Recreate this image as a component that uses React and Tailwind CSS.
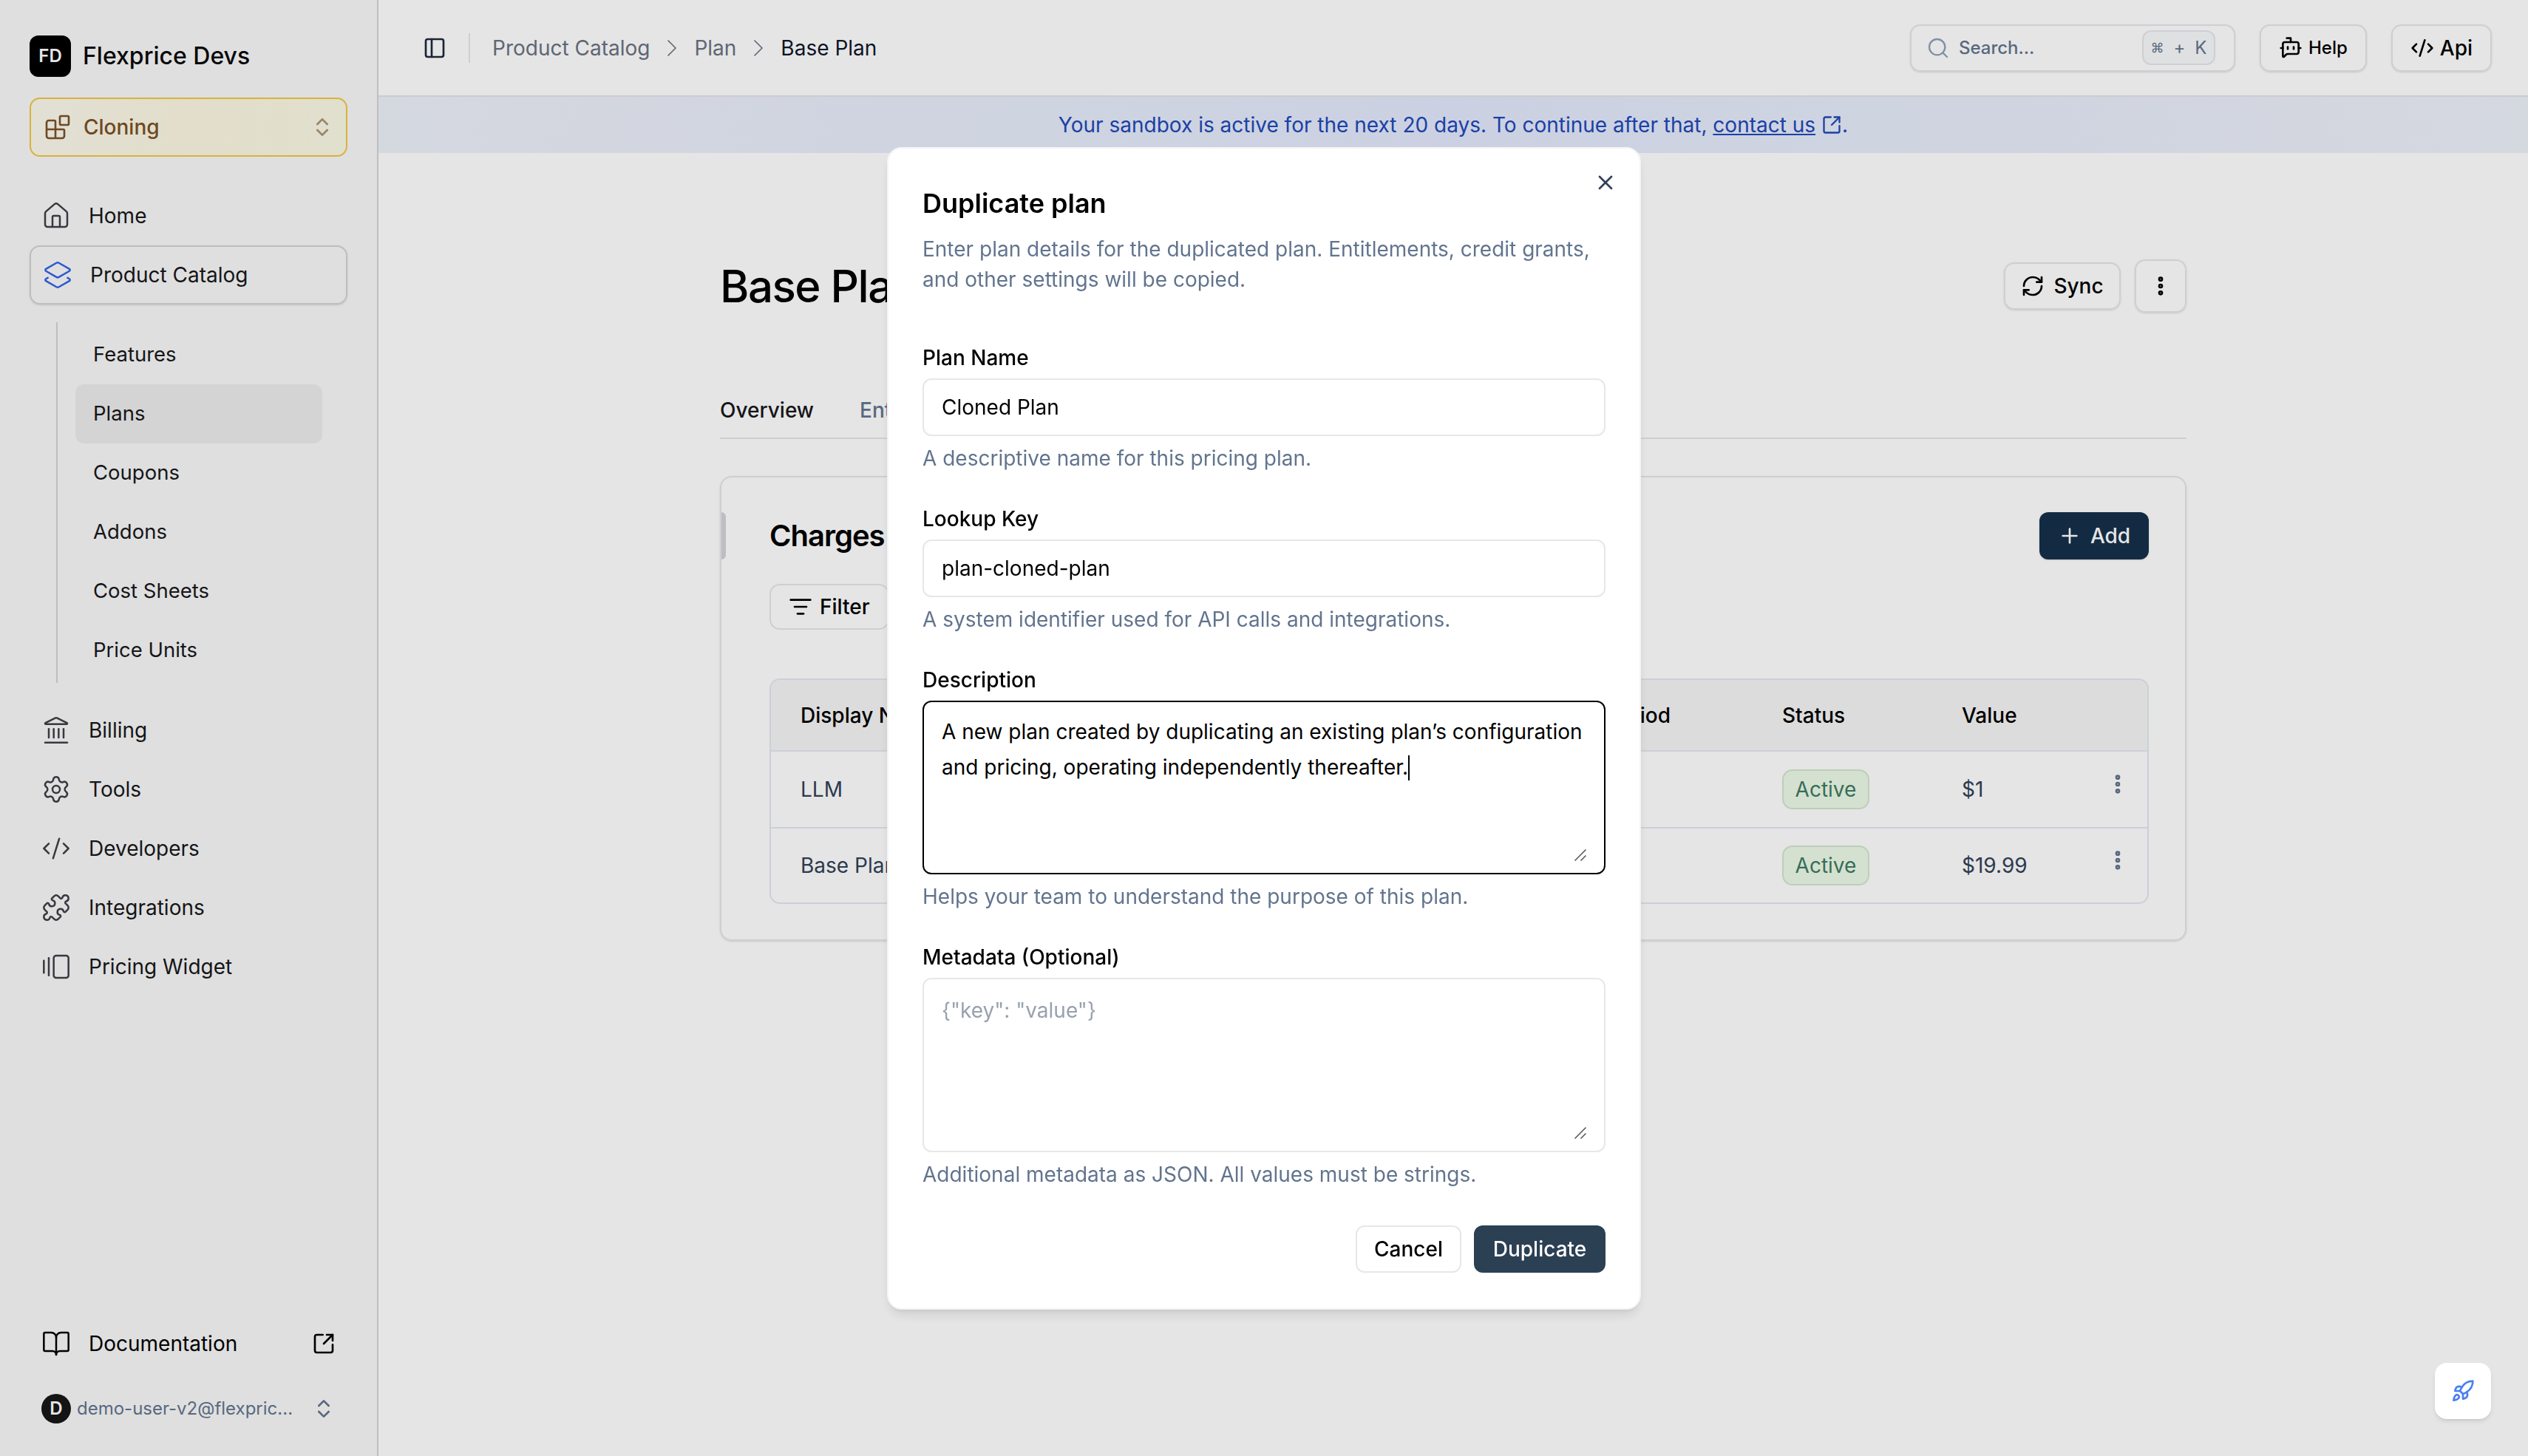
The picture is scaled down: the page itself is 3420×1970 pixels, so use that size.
import React from "react";
import {
  Blocks, ChevronsUpDown, House, Layers2, Landmark, Settings, CodeXml, Puzzle, GalleryHorizontalEnd,
  BookOpen, SquareArrowOutUpRight, PanelLeft, ChevronRight, Search, BotMessageSquare, RefreshCw,
  EllipsisVertical, ListFilter, Plus, X, Rocket,
} from "lucide-react";

function NavRow({ icon: Icon, label }) {
  return (
    <div className="flex h-20 items-center gap-6 px-4 text-[28px] text-zinc-900">
      <Icon size={40} strokeWidth={1.5} className="shrink-0 text-zinc-700" />
      <span>{label}</span>
    </div>
  );
}

function SubRow({ label, active }) {
  return (
    <div className={`flex h-20 w-[334px] items-center rounded-[12px] pl-6 text-[27.5px] text-zinc-900 ${active ? "bg-[#ececec]" : ""}`}>
      {label}
    </div>
  );
}

function Sidebar() {
  return (
    <aside className="flex h-full w-[512px] shrink-0 flex-col border-r-2 border-zinc-300 bg-[#f9f9f9] pt-12 pr-10 pb-11 pl-10">
      <div className="flex h-14 items-center gap-4">
        <div className="flex h-14 w-14 items-center justify-center rounded-[12px] bg-black text-[24px] font-semibold text-white">FD</div>
        <span className="text-[32px] font-medium text-zinc-950">Flexprice Devs</span>
      </div>
      <div className="mt-7 flex h-20 items-center rounded-[14px] border-2 border-[#f2c744] bg-gradient-to-r from-[#fcfaee] via-[#fcf8e2] to-[#fbf9e6] pr-4 pl-[18px] text-[#7a5226]">
        <Blocks size={36} strokeWidth={1.75} className="shrink-0" />
        <span className="ml-[17px] text-[28px] font-medium">Cloning</span>
        <ChevronsUpDown size={32} className="ml-auto opacity-60" />
      </div>
      <nav className="mt-10 flex flex-col">
        <NavRow icon={House} label="Home" />
        <div className="flex h-20 items-center gap-6 rounded-[14px] border-2 border-zinc-300 px-4 text-[28px] text-zinc-900 shadow-sm">
          <Layers2 size={40} strokeWidth={1.5} className="shrink-0 text-[#2f62e9]" />
          <span>Product Catalog</span>
        </div>
        <div className="mt-6 ml-9 flex flex-col border-l-2 border-zinc-300 py-1 pl-6">
          <SubRow label="Features" />
          <SubRow label="Plans" active />
          <SubRow label="Coupons" />
          <SubRow label="Addons" />
          <SubRow label="Cost Sheets" />
          <SubRow label="Price Units" />
        </div>
        <div className="mt-6 flex flex-col">
          <NavRow icon={Landmark} label="Billing" />
          <NavRow icon={Settings} label="Tools" />
          <NavRow icon={CodeXml} label="Developers" />
          <NavRow icon={Puzzle} label="Integrations" />
          <NavRow icon={GalleryHorizontalEnd} label="Pricing Widget" />
        </div>
      </nav>
      <div className="mt-auto flex flex-col">
        <div className="flex h-20 items-center gap-6 pr-4 pl-4 text-[28px] text-black">
          <BookOpen size={40} strokeWidth={1.5} className="shrink-0" />
          <span>Documentation</span>
          <SquareArrowOutUpRight size={32} strokeWidth={2} className="ml-auto" />
        </div>
        <div className="mt-7 flex h-10 items-center pr-4 pl-4">
          <div className="flex h-10 w-10 shrink-0 items-center justify-center rounded-full bg-[#171717] text-[24px] font-semibold text-white">D</div>
          <span className="ml-2 whitespace-nowrap text-[24px] text-slate-500">demo-user-v2@flexpric...</span>
          <ChevronsUpDown size={32} className="ml-auto text-slate-500" />
        </div>
      </div>
    </aside>
  );
}

function Header() {
  return (
    <header className="flex h-[131px] shrink-0 items-center border-b-2 border-[#e6e3e6] pr-[49px] pl-[60px]">
      <PanelLeft size={32} className="shrink-0 text-slate-800" />
      <div className="mx-[30px] h-10 w-[2px] bg-gray-200" />
      <div className="flex items-center gap-[10px] text-[28px] text-gray-500">
        <span>Product Catalog</span>
        <ChevronRight size={40} strokeWidth={1} />
        <span>Plan</span>
        <ChevronRight size={40} strokeWidth={1} />
        <span className="text-slate-900">Base Plan</span>
      </div>
      <div className="ml-auto flex items-center gap-[33px]">
        <div className="flex h-16 w-[440px] items-center rounded-[14px] border-2 border-gray-200 pr-[25px] pl-[20px] shadow-sm">
          <Search size={32} strokeWidth={1.75} className="text-slate-400" />
          <span className="ml-3 text-[24px] font-medium text-slate-500">Search...</span>
          <div className="ml-auto flex h-[47px] w-[99px] items-center justify-center gap-[13px] rounded-[12px] border-2 border-gray-200 bg-gray-50 text-[24px] text-slate-500">
            <span className="text-[18px]">⌘</span>
            <span>+</span>
            <span>K</span>
          </div>
        </div>
        <button className="flex h-16 items-center gap-2 rounded-[14px] border-2 border-gray-200 px-6 text-[24px] font-medium text-black shadow-sm">
          <BotMessageSquare size={32} strokeWidth={2} />
          Help
        </button>
        <button className="flex h-16 items-center gap-2 rounded-[14px] border-2 border-gray-200 px-6 text-[28px] font-medium text-black shadow-sm">
          <CodeXml size={32} strokeWidth={2} />
          Api
        </button>
      </div>
    </header>
  );
}

function Banner() {
  return (
    <div className="flex h-[76px] shrink-0 items-center justify-center bg-gradient-to-r from-[#edf1f9] via-[#e3e9fc] to-[#edf1f9] text-[28px] text-[#2048b8]">
      <span>Your sandbox is active for the next 20 days. To continue after that,&nbsp;</span>
      <span className="underline">contact us</span>
      <SquareArrowOutUpRight size={28} strokeWidth={2} className="ml-2" />
      <span>.</span>
    </div>
  );
}

function Badge() {
  return (
    <span className="inline-flex h-[54px] w-[118px] items-center justify-center rounded-[14px] border-2 border-[#d3e6cf] bg-[#edfbe8] text-[28px] text-[#3f7a63]">Active</span>
  );
}

function Row({ name, value, cls }) {
  return (
    <div className={`grid grid-cols-[990px_338px_243px_212px_78px] items-center border-t-2 border-slate-200 text-[28px] text-slate-700 ${cls}`}>
      <div className="pl-10">{name}</div>
      <div className="pl-[52px]">Monthly</div>
      <div className="pl-10"><Badge /></div>
      <div className="pl-10">{value}</div>
      <div className="flex justify-center"><EllipsisVertical size={32} strokeWidth={3} className="-mt-[14px] text-slate-500" /></div>
    </div>
  );
}

function PageBody() {
  return (
    <div className="mx-auto flex w-[1984px] flex-col pt-[144px]">
      <div className="flex h-[72px] items-center">
        <h1 className="text-[60px] leading-none font-medium tracking-tight text-black">Base Plan</h1>
        <button className="ml-auto flex h-[64px] w-[158px] items-center justify-center gap-[12px] rounded-[14px] border-2 border-gray-200 text-[28px] font-medium text-black shadow-sm">
          <RefreshCw size={32} strokeWidth={2} />
          Sync
        </button>
        <button className="ml-[19px] flex h-[72px] w-[70px] items-center justify-center rounded-[14px] border-2 border-gray-200 text-black shadow-sm">
          <EllipsisVertical size={32} strokeWidth={3} />
        </button>
      </div>
      <div className="mt-[91px] flex h-20 items-center gap-[62px] border-b-2 border-gray-200 pt-1 text-[28px] font-medium text-slate-500">
        <span className="text-zinc-900">Overview</span>
        <span>Entitlements</span>
        <span>Credit Grants</span>
      </div>
      <div className="relative mt-[50px] flex h-[629px] flex-col rounded-[16px] border-2 border-gray-200 pt-[47px] pr-[49px] pl-[65px] shadow-sm">
        <div className="absolute top-[47px] left-0 h-16 w-[6px] rounded-r-[6px] bg-zinc-300" />
        <div className="flex h-16 items-center">
          <h2 className="text-[40px] font-semibold tracking-tight text-black">Charges</h2>
          <button className="ml-auto flex h-16 w-[148px] items-center justify-center gap-[12px] rounded-[12px] bg-[#16304a] text-[28px] font-medium text-white shadow-sm">
            <Plus size={32} strokeWidth={2} />
            Add
          </button>
        </div>
        <div className="mt-[33px] flex">
          <button className="flex h-[62px] items-center gap-[10px] rounded-[14px] border-2 border-gray-200 px-6 text-[28px] font-medium text-black">
            <ListFilter size={32} strokeWidth={2} />
            Filter
          </button>
        </div>
        <div className="mt-[66px] overflow-hidden rounded-[14px] border-2 border-slate-200">
          <div className="grid h-[95px] grid-cols-[990px_338px_243px_212px_78px] items-center bg-[#f5f5f5] text-[28px] font-medium text-black">
            <div className="pl-10">Display Name</div>
            <div className="pl-[52px]">Billing Period</div>
            <div className="pl-10">Status</div>
            <div className="pl-10">Value</div>
            <div />
          </div>
          <Row name="LLM" value="$1" cls="h-[104px]" />
          <Row name="Base Plan" value="$19.99" cls="h-[102px]" />
        </div>
      </div>
    </div>
  );
}

function Grip() {
  return (
    <svg width="16" height="16" viewBox="0 0 16 16" className="pointer-events-none absolute right-[26px] bottom-[18px] text-zinc-600">
      <path d="M0.5 15.5 15.5 0.5M8.5 15.5 15.5 8.5" stroke="currentColor" strokeWidth="1.5" fill="none" />
    </svg>
  );
}

function Field({ label, help, children, cls = "mt-[42px]" }) {
  return (
    <div className={cls}>
      <label className="block h-10 text-[28px] leading-10 font-medium text-black">{label}</label>
      <div className="relative mt-2">{children}</div>
      <p className="mt-[10px] h-10 text-[28px] leading-10 text-slate-500">{help}</p>
    </div>
  );
}

const inputCls = "block h-[78px] w-full rounded-[12px] border-2 border-gray-200 bg-white px-6 text-[28px] text-black outline-none";

function Modal() {
  return (
    <div className="fixed inset-0 z-40 flex items-center justify-center bg-black/10">
      <div className="relative flex w-[1020px] flex-col rounded-[20px] border-2 border-gray-100 bg-white px-[46px] pt-[46px] pb-[48px] shadow-lg">
        <X size={32} strokeWidth={2} className="absolute top-[30px] right-[30px] text-slate-700" />
        <h2 className="h-14 text-[36px] leading-[56px] font-semibold text-black">Duplicate plan</h2>
        <p className="mt-[14px] text-[28px] leading-[41px] text-slate-500">
          Enter plan details for the duplicated plan. Entitlements, credit grants, and other settings will be copied.
        </p>
        <Field label="Plan Name" help="A descriptive name for this pricing plan." cls="mt-[65px]">
          <input className={inputCls} defaultValue="Cloned Plan" />
        </Field>
        <Field label="Lookup Key" help="A system identifier used for API calls and integrations.">
          <input className={inputCls} defaultValue="plan-cloned-plan" />
        </Field>
        <Field label="Description" help="Helps your team to understand the purpose of this plan.">
          <div className="h-[235px] rounded-[12px] border-2 border-black bg-white px-6 pt-4 text-[28px] leading-[48px] text-black">
            A new plan created by duplicating an existing plan’s configuration and pricing, operating independently thereafter.
            <span className="inline-block h-[34px] w-[2px] bg-black align-[-8px]" />
          </div>
          <Grip />
        </Field>
        <Field label="Metadata (Optional)" help="Additional metadata as JSON. All values must be strings.">
          <textarea
            className="block h-[236px] w-full resize-none rounded-[12px] border-2 border-gray-200 bg-white px-6 py-[18px] text-[28px] leading-[48px] text-black outline-none placeholder:text-gray-400"
            placeholder='{"key": "value"}'
          />
          <Grip />
        </Field>
        <div className="mt-[49px] flex justify-end gap-[17px]">
          <button className="flex h-16 w-[143px] items-center justify-center rounded-[12px] border-2 border-gray-200 bg-white text-[28px] font-medium text-black">Cancel</button>
          <button className="flex h-16 w-[178px] items-center justify-center rounded-[12px] bg-[#2c4054] text-[28px] font-medium text-white">Duplicate</button>
        </div>
      </div>
    </div>
  );
}

export default function App() {
  return (
    <div className="relative flex h-screen w-screen overflow-hidden bg-white font-['Inter',sans-serif]">
      <Sidebar />
      <main className="flex min-w-0 flex-1 flex-col">
        <Header />
        <Banner />
        <PageBody />
      </main>
      <Modal />
      <div className="fixed right-[50px] bottom-[50px] z-50 flex h-[76px] w-[76px] items-center justify-center rounded-[16px] bg-white shadow-md">
        <Rocket size={32} strokeWidth={2} className="text-[#4a80f0]" />
      </div>
    </div>
  );
}
